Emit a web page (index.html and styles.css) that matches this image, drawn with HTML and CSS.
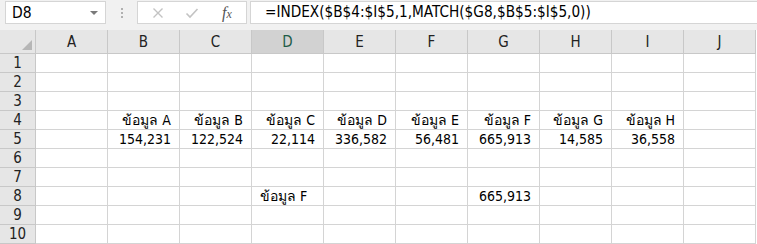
FILE: index.html
```html
<!DOCTYPE html>
<html>
<head>
<meta charset="utf-8">
<link rel="stylesheet" href="styles.css">
</head>
<body>
<div class="app">
  <div class="fbar">
    <div class="namebox"><span class="nb-text">D8</span><span class="nb-arrow"></span></div>
    <div class="grip"><span></span><span></span><span></span></div>
    <div class="btns">
      <svg class="ico" width="14" height="14" viewBox="0 0 14 14"><path d="M2.5 2.5 L11.5 11.5 M11.5 2.5 L2.5 11.5" stroke="#c3c3c3" stroke-width="1.4" fill="none"/></svg>
      <svg class="ico" width="14" height="14" viewBox="0 0 14 14"><path d="M1.5 7.5 L5 11 L12.5 3" stroke="#c3c3c3" stroke-width="1.6" fill="none"/></svg>
      <span class="fx">f<span class="fxx">x</span></span>
    </div>
    <div class="formula">=INDEX($B$4:$I$5,1,MATCH($G8,$B$5:$I$5,0))</div>
  </div>
  <div class="grid">
    <div class="corner"><span class="tri"></span></div>
    <div class="ch">A</div><div class="ch">B</div><div class="ch">C</div><div class="ch sel">D</div><div class="ch">E</div><div class="ch">F</div><div class="ch">G</div><div class="ch">H</div><div class="ch">I</div><div class="ch">J</div>

    <div class="rh">1</div><div class="c"></div><div class="c"></div><div class="c"></div><div class="c"></div><div class="c"></div><div class="c"></div><div class="c"></div><div class="c"></div><div class="c"></div><div class="c"></div>
    <div class="rh">2</div><div class="c"></div><div class="c"></div><div class="c"></div><div class="c"></div><div class="c"></div><div class="c"></div><div class="c"></div><div class="c"></div><div class="c"></div><div class="c"></div>
    <div class="rh">3</div><div class="c"></div><div class="c"></div><div class="c"></div><div class="c"></div><div class="c"></div><div class="c"></div><div class="c"></div><div class="c"></div><div class="c"></div><div class="c"></div>
    <div class="rh">4</div><div class="c"></div><div class="c r">ข้อมูล A</div><div class="c r">ข้อมูล B</div><div class="c r">ข้อมูล C</div><div class="c r">ข้อมูล D</div><div class="c r">ข้อมูล E</div><div class="c r">ข้อมูล F</div><div class="c r">ข้อมูล G</div><div class="c r">ข้อมูล H</div><div class="c"></div>
    <div class="rh">5</div><div class="c"></div><div class="c r">154,231</div><div class="c r">122,524</div><div class="c r">22,114</div><div class="c r">336,582</div><div class="c r">56,481</div><div class="c r">665,913</div><div class="c r">14,585</div><div class="c r">36,558</div><div class="c"></div>
    <div class="rh">6</div><div class="c"></div><div class="c"></div><div class="c"></div><div class="c"></div><div class="c"></div><div class="c"></div><div class="c"></div><div class="c"></div><div class="c"></div><div class="c"></div>
    <div class="rh">7</div><div class="c"></div><div class="c"></div><div class="c"></div><div class="c"></div><div class="c"></div><div class="c"></div><div class="c"></div><div class="c"></div><div class="c"></div><div class="c"></div>
    <div class="rh">8</div><div class="c"></div><div class="c"></div><div class="c"></div><div class="c l">ข้อมูล F</div><div class="c"></div><div class="c"></div><div class="c r">665,913</div><div class="c"></div><div class="c"></div><div class="c"></div>
    <div class="rh">9</div><div class="c"></div><div class="c"></div><div class="c"></div><div class="c"></div><div class="c"></div><div class="c"></div><div class="c"></div><div class="c"></div><div class="c"></div><div class="c"></div>
    <div class="rh">10</div><div class="c"></div><div class="c"></div><div class="c"></div><div class="c"></div><div class="c"></div><div class="c"></div><div class="c"></div><div class="c"></div><div class="c"></div><div class="c"></div>
  </div>
</div>
</body>
</html>
```
FILE: styles.css
```css
html, body {
  margin: 0;
  padding: 0;
  background: #ffffff;
}
.app {
  width: 757px;
  height: 244px;
  overflow: hidden;
  background: #f1f1f1;
  font-family: "DejaVu Sans Condensed", "DejaVu Sans", sans-serif;
  color: #000;
}
.fbar {
  height: 30px;
  display: flex;
  align-items: flex-start;
  padding-top: 1px;
  box-sizing: border-box;
}
.namebox {
  margin-left: 5px;
  width: 101px;
  height: 23px;
  box-sizing: border-box;
  border: 1px solid #d5d5d5;
  background: #fff;
  display: flex;
  align-items: center;
  justify-content: space-between;
  padding: 0 7px 0 6px;
}
.nb-text {
  font-size: 15.5px;
}
.nb-arrow {
  width: 0;
  height: 0;
  border-left: 4px solid transparent;
  border-right: 4px solid transparent;
  border-top: 4px solid #7a7a7a;
}
.grip {
  width: 31px;
  height: 23px;
  display: flex;
  flex-direction: column;
  align-items: center;
  justify-content: center;
  gap: 2px;
}
.grip span {
  width: 2px;
  height: 2px;
  background: #b0b0b0;
}
.btns {
  width: 110px;
  height: 23px;
  box-sizing: border-box;
  border: 1px solid #d5d5d5;
  background: #fff;
  display: flex;
  align-items: center;
  padding-left: 13px;
  gap: 20px;
}
.fx {
  font-family: "Liberation Serif", serif;
  font-style: italic;
  font-size: 16px;
  color: #555;
  margin-left: 3px;
}
.fxx {
  font-size: 12px;
}
.formula {
  margin-left: 3px;
  flex: 1;
  height: 23px;
  box-sizing: border-box;
  border: 1px solid #d5d5d5;
  border-right: none;
  background: #fff;
  font-size: 15.2px;
  line-height: 21px;
  padding-left: 14px;
  white-space: nowrap;
}
.grid {
  display: grid;
  grid-template-columns: 36px repeat(10, 72px);
  grid-template-rows: 24px repeat(10, 19px);
  background: #fff;
  font-size: 14px;
}
.corner {
  background: #e6e6e6;
  border-right: 1px solid #c8c8c8;
  border-bottom: 1px solid #c8c8c8;
  position: relative;
}
.tri {
  position: absolute;
  right: 3px;
  bottom: 3px;
  width: 0;
  height: 0;
  border-left: 10px solid transparent;
  border-bottom: 10px solid #b6b6b6;
}
.ch {
  background: #e6e6e6;
  border-right: 1px solid #c8c8c8;
  border-bottom: 1px solid #c8c8c8;
  display: flex;
  align-items: center;
  justify-content: center;
  font-size: 15px;
  color: #222;
}
.ch.sel {
  background: #d2d2d2;
  color: #1e5c48;
}
.rh {
  background: #e6e6e6;
  border-right: 1px solid #c8c8c8;
  border-bottom: 1px solid #c8c8c8;
  display: flex;
  align-items: center;
  justify-content: center;
  font-size: 15px;
  color: #222;
}
.c {
  border-right: 1px solid #d4d4d4;
  border-bottom: 1px solid #d4d4d4;
  display: flex;
  align-items: center;
  padding: 0 8px 0 8px;
  white-space: nowrap;
  overflow: visible;
  line-height: 18px;
}
.c.r {
  justify-content: flex-end;
}
.c.l {
  justify-content: flex-start;
}
```
